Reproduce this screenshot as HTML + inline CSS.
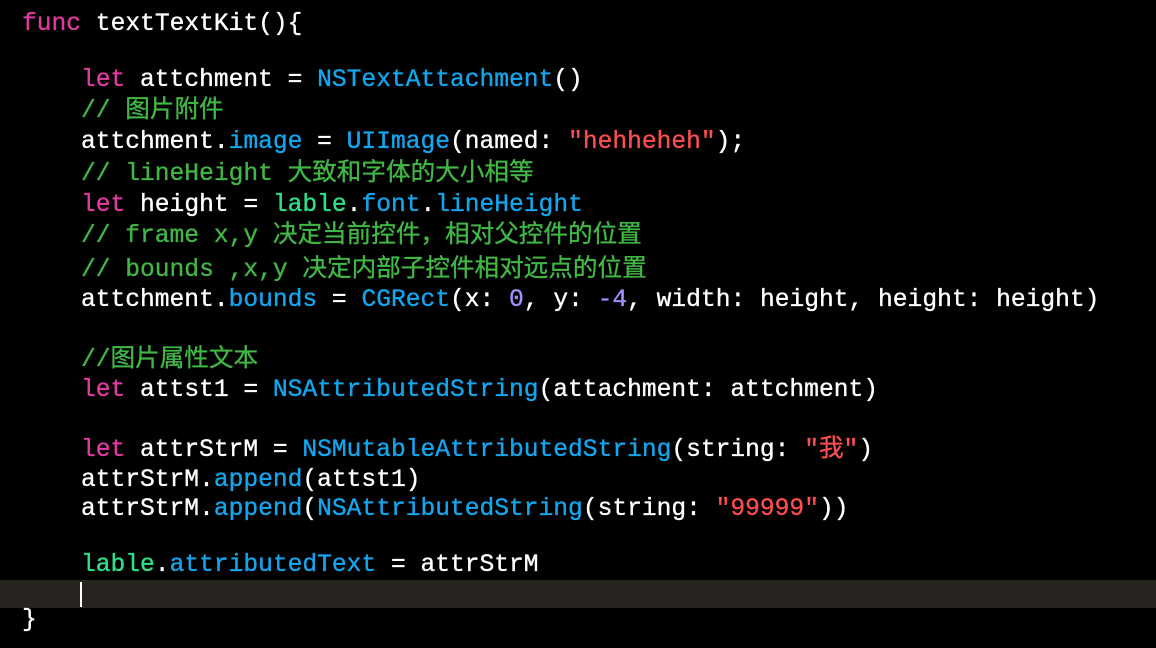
<!DOCTYPE html><html><head><meta charset="utf-8"><style>
body{margin:0;width:1156px;height:648px;background:#000;overflow:hidden;position:relative;font-family:"Liberation Mono","Noto Sans CJK SC",monospace;font-size:24.6px;color:#fff;-webkit-text-stroke:0.35px currentColor;}
.l{position:absolute;left:81px;white-space:pre;line-height:30px;height:30px;}
.k{color:#e03aa0}.t{color:#13a6ef}.c{color:#41b645}.s{color:#fc4d50}.n{color:#a38cff}.g{color:#2fe08a}
.cur{position:absolute;left:0;top:580px;width:1156px;height:28px;background:#272420}
.caret{position:absolute;left:80px;top:582px;width:2px;height:25px;background:#fff}
</style></head><body>
<div class="cur"></div><div class="caret"></div>
<div class="l" style="left:22px;top:10px"><span class="k">func</span> textTextKit(){</div>
<div class="l" style="top:66px"><span class="k">let</span> attchment = <span class="t">NSTextAttachment</span>()</div>
<div class="l c" style="top:97px">// 图片附件</div>
<div class="l" style="top:128px">attchment.<span class="t">image</span> = <span class="t">UIImage</span>(named: <span class="s">"hehheheh"</span>);</div>
<div class="l c" style="top:160px">// lineHeight 大致和字体的大小相等</div>
<div class="l" style="top:191px"><span class="k">let</span> height = <span class="g">lable</span>.<span class="t">font</span>.<span class="t">lineHeight</span></div>
<div class="l c" style="top:222px">// frame x,y 决定当前控件，相对父控件的位置</div>
<div class="l c" style="top:256px">// bounds ,x,y 决定内部子控件相对远点的位置</div>
<div class="l" style="top:286px">attchment.<span class="t">bounds</span> = <span class="t">CGRect</span>(x: <span class="n">0</span>, y: <span class="n">-4</span>, width: height, height: height)</div>
<div class="l c" style="top:346px">//图片属性文本</div>
<div class="l" style="top:376px"><span class="k">let</span> attst1 = <span class="t">NSAttributedString</span>(attachment: attchment)</div>
<div class="l" style="top:436px"><span class="k">let</span> attrStrM = <span class="t">NSMutableAttributedString</span>(string: <span class="s">"我"</span>)</div>
<div class="l" style="top:466px">attrStrM.<span class="t">append</span>(attst1)</div>
<div class="l" style="top:495px">attrStrM.<span class="t">append</span>(<span class="t">NSAttributedString</span>(string: <span class="s">"99999"</span>))</div>
<div class="l" style="top:551px"><span class="g">lable</span>.<span class="t">attributedText</span> = attrStrM</div>
<div class="l" style="left:22px;top:606px">}</div>
</body></html>
